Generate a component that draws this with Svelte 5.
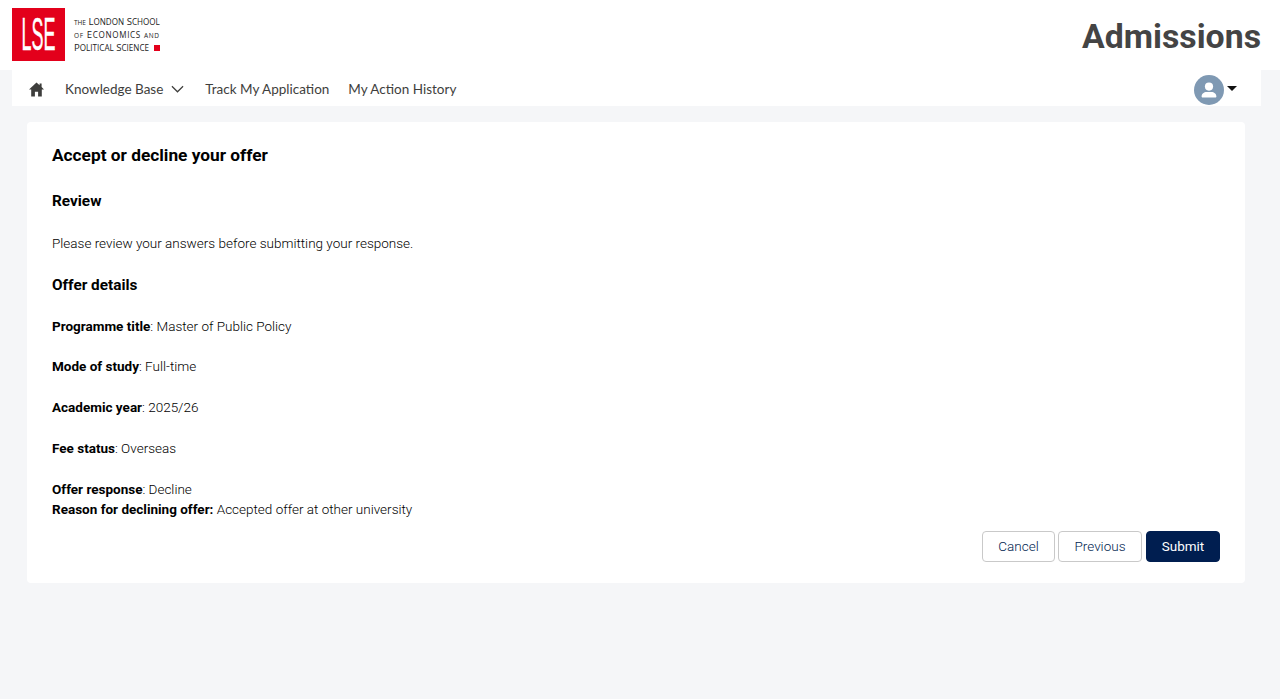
<script>
  const rows = [
    { label: 'Programme title', value: ': Master of Public Policy' },
    { label: 'Mode of study', value: ': Full-time' },
    { label: 'Academic year', value: ': 2025/26' },
    { label: 'Fee status', value: ': Overseas' }
  ];
</script>

<div class="page">
  <header class="top">
    <div class="brand">
      <div class="mark"><span>LSE</span></div>
      <div class="school">
        <div class="line"><span class="sm">THE</span> L<span class="sc">ONDON</span> S<span class="sc">CHOOL</span></div>
        <div class="line wide"><span class="sm">OF</span> E<span class="sc">CONOMICS</span> <span class="sm">AND</span></div>
        <div class="line">P<span class="sc">OLITICAL</span> S<span class="sc">CIENCE</span><i class="dot"></i></div>
      </div>
    </div>
    <div class="app-title">Admissions</div>
  </header>

  <nav class="nav">
    <svg class="home" viewBox="0 0 15 15" width="15" height="15" aria-hidden="true">
      <path d="M7.5 0.4 0 7.400h2.200v7.200h3.700V9.800h3.200v4.800h3.700V7.400H15l-2.400-2.300V1.400h-2v1.900z" fill="#3e3e3c" />
    </svg>
    <span class="link">Knowledge Base</span>
    <svg class="chev" viewBox="0 0 14 8" width="13" height="8" aria-hidden="true">
      <path d="M1 1l6 6 6-6" fill="none" stroke="#3e3e3c" stroke-width="1.3" />
    </svg>
    <span class="link track">Track My Application</span>
    <span class="link">My Action History</span>
    <div class="user">
      <svg viewBox="0 0 30 30" width="30" height="30" aria-hidden="true">
        <circle cx="15" cy="15" r="15" fill="#7f99b3" />
        <circle cx="15" cy="11.6" r="4.1" fill="#fff" />
        <path d="M7.6 21.6c0-3.2 2.6-4.7 4.8-4.700h5.200c2.200 0 4.800 1.500 4.800 4.700 0 .7-.5 1-1 1H8.600c-.5 0-1-.3-1-1z" fill="#fff" />
      </svg>
      <svg class="caret" viewBox="0 0 10 5" width="10" height="5" aria-hidden="true">
        <path d="M0 0h10L5 5z" fill="#111" />
      </svg>
    </div>
  </nav>

  <main class="card">
    <h1>Accept or decline your offer</h1>
    <h2 class="first">Review</h2>
    <p class="lead">Please review your answers before submitting your response.</p>
    <h2>Offer details</h2>
    {#each rows as r, i}
      <p class:start={i === 0}><b>{r.label}</b>{r.value}</p>
    {/each}
    <div class="tight">
      <div><b>Offer response</b>: Decline</div>
      <div><b>Reason for declining offer:</b> Accepted offer at other university</div>
    </div>
    <div class="actions">
      <button class="btn">Cancel</button>
      <button class="btn prev">Previous</button>
      <button class="btn primary">Submit</button>
    </div>
  </main>
</div>

<style>
  :global(body) {
    margin: 0;
    background: #f5f6f8;
  }
  .page {
    min-height: 699px;
    background: #f5f6f8;
    font-family: Roboto, sans-serif;
  }
  .top {
    height: 70px;
    background: #fff;
    display: flex;
    align-items: flex-start;
    justify-content: space-between;
    padding: 0 19px 0 12px;
  }
  .brand {
    display: flex;
    align-items: flex-start;
    padding-top: 8px;
  }
  .mark {
    width: 52.5px;
    height: 52.5px;
    background: #e3001b;
    color: #fff;
    font-family: "Liberation Sans", sans-serif;
    font-size: 46px;
    line-height: 52px;
    display: flex;
    justify-content: center;
    overflow: hidden;
  }
  .mark span {
    display: block;
    flex: none;
    transform: scaleX(0.39);
    -webkit-text-stroke: 0.5px #fff;
  }
  .school {
    margin-left: 9.5px;
    padding-top: 7px;
    font-family: "Open Sans", sans-serif;
    font-size: 9.6px;
    color: #222;
    white-space: nowrap;
  }
  .line {
    height: 13px;
    line-height: 13px;
  }
  .sc { font-size: 8.1px; }
  .sm { font-size: 6.5px; }
  .wide { letter-spacing: 0.65px; }
  .dot {
    display: inline-block;
    width: 6px;
    height: 6px;
    background: #e3001b;
    margin-left: 5px;
  }
  .app-title {
    font-size: 33.8px;
    font-weight: 700;
    line-height: 40px;
    padding-top: 17px;
    color: #444;
  }
  .nav {
    height: 36px;
    margin: 0 19px 0 12px;
    background: #fff;
    display: flex;
    align-items: center;
    font-family: Lato, sans-serif;
    font-size: 13.5px;
    color: #3e3e3c;
    padding-left: 17px;
    padding-right: 24px;
  }
  .link { position: relative; top: 1px; }
  .home { margin-right: 21px; margin-top: 2px; }
  .chev { margin-left: 8px; margin-right: 21px; margin-top: 2px; }
  .track { margin-right: 19px; }
  .user {
    margin-left: auto;
    display: flex;
    align-items: center;
    gap: 3px;
    margin-top: 3px;
  }
  .caret { margin-bottom: 3px; }
  .card {
    margin: 16px 35px 0 27px;
    height: 461px;
    box-sizing: border-box;
    background: #fff;
    border-radius: 4px;
    padding: 23px 25px 0;
    font-size: 13.5px;
    font-weight: 300;
    line-height: 20px;
    color: #000;
  }
  h1 {
    margin: 0;
    font-size: 17.3px;
    font-weight: 700;
    line-height: 20px;
  }
  h2 {
    margin: 0;
    font-size: 15.35px;
    font-weight: 700;
    line-height: 20px;
    padding-top: 21.5px;
  }
  h2.first { padding-top: 26px; }
  p {
    margin: 0;
    padding-top: 20.75px;
  }
  p.lead { padding-top: 22px; }
  p.start { padding-top: 21.2px; }
  b { font-weight: 700; }
  .tight { padding-top: 20.75px; }
  .actions {
    display: flex;
    justify-content: flex-end;
    gap: 3px;
    padding-top: 12.5px;
  }
  .btn {
    height: 31px;
    width: 73px;
    box-sizing: border-box;
    font-family: Roboto, sans-serif;
    font-size: 13.5px;
    font-weight: 300;
    color: #001e50;
    background: #fff;
    border: 1px solid #c9c9c9;
    border-radius: 4px;
    padding: 0 0 2px;
  }
  .prev { width: 84px; margin-right: 1px; }
  .primary {
    width: 74px;
    background: #001e50;
    border-color: #001e50;
    color: #fff;
    font-weight: 400;
  }
</style>
